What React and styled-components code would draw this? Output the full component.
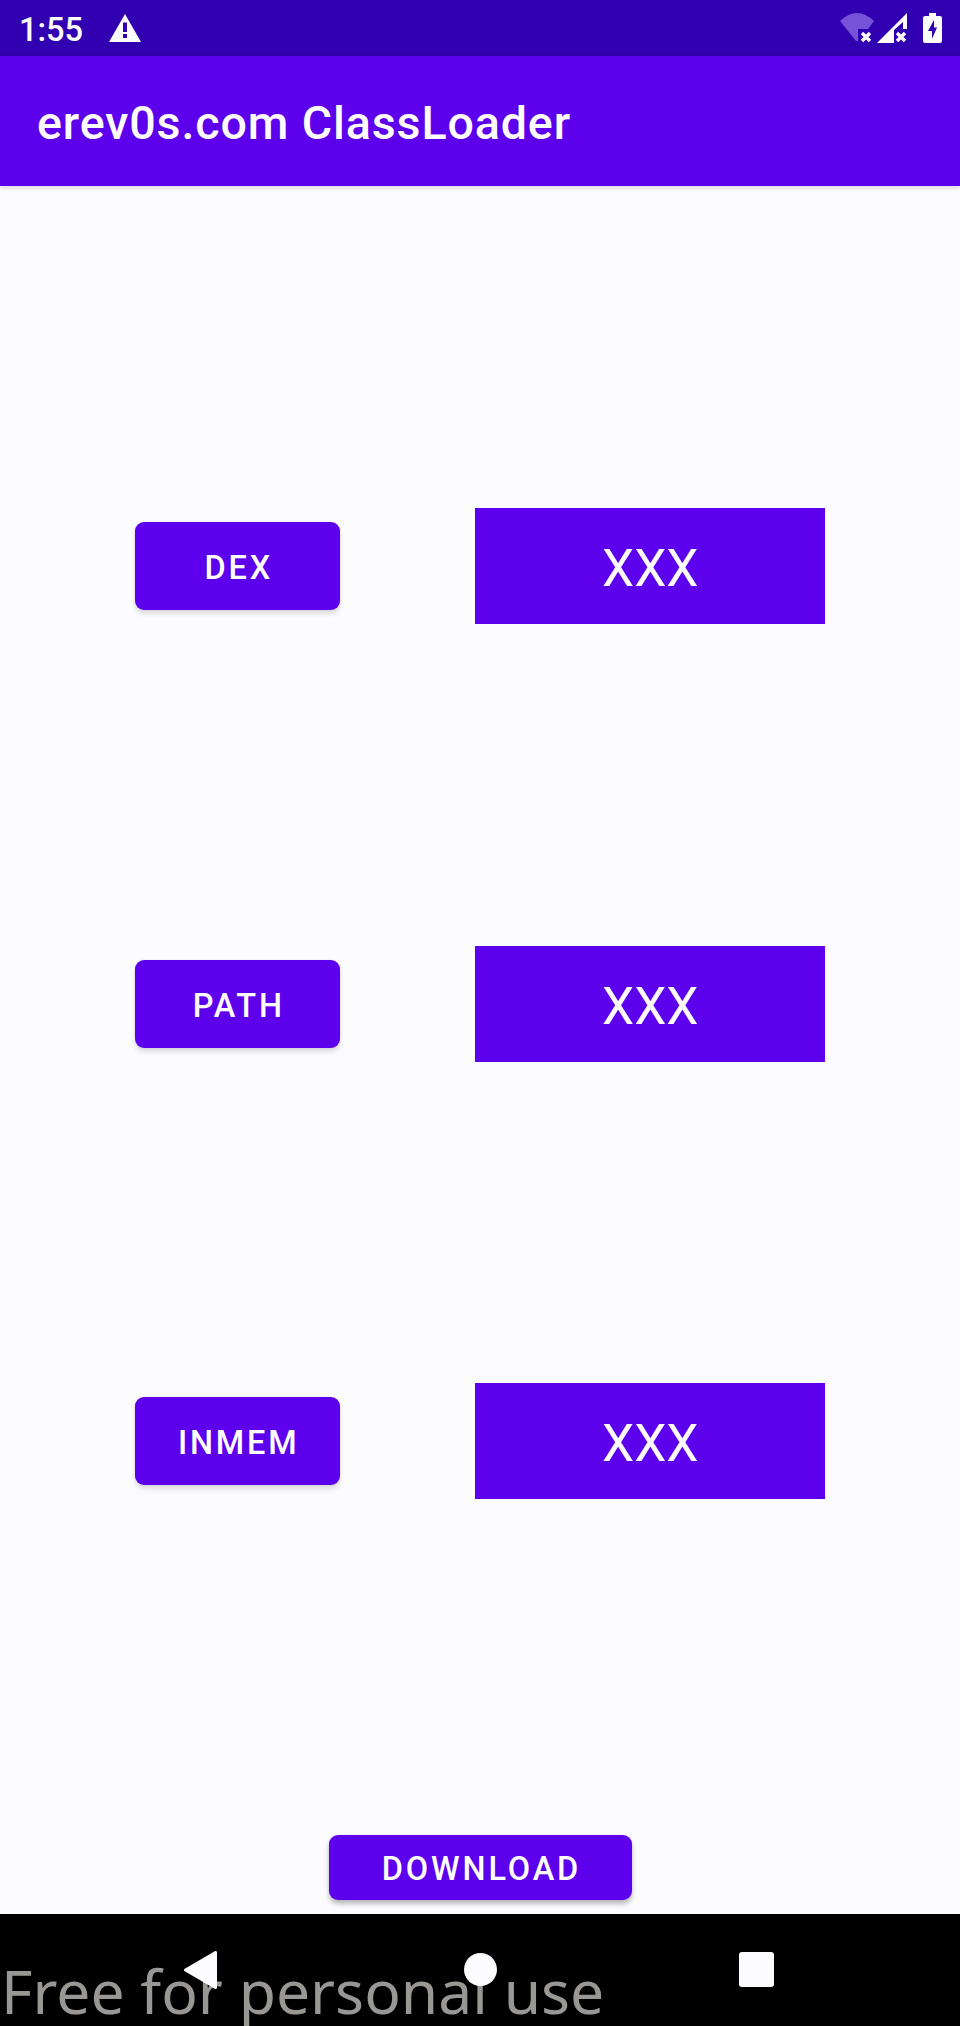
import React from "react";
import styled, { createGlobalStyle } from "styled-components";

const GlobalStyle = createGlobalStyle`
  * { box-sizing: border-box; }
  body { margin: 0; background: #fcfcff; font-family: Roboto, "Liberation Sans", sans-serif; }
`;

const Screen = styled.div`
  width: 960px;
  height: 2026px;
  display: flex;
  flex-direction: column;
  overflow: hidden;
  background: #fcfcff;
`;

const StatusBar = styled.header`
  height: 56px;
  flex: none;
  display: flex;
  align-items: center;
  justify-content: space-between;
  padding: 0 18px 0 19px;
  background: #3100b0;
  color: #fcfcff;
`;

const StatusGroup = styled.div`
  display: flex;
  align-items: center;
  gap: ${({ $gap }) => $gap}px;
`;

const Clock = styled.span`
  font-size: 32.6px;
  font-weight: 500;
  line-height: 40px;
  padding-top: 3px;
`;

const Glyph = styled.svg`
  display: block;
  flex: none;
`;

const AppBar = styled.div`
  height: 130px;
  flex: none;
  display: flex;
  align-items: center;
  padding: 4px 37px 0;
  background: #5d00ec;
  box-shadow: 0 2px 5px rgba(0, 0, 0, 0.14);
  z-index: 1;
`;

const Title = styled.h1`
  margin: 0;
  color: #fcfcff;
  font-size: 46.6px;
  font-weight: 500;
  line-height: 56px;
  letter-spacing: 0.87px;
  white-space: nowrap;
`;

const Content = styled.main`
  height: 1728px;
  flex: none;
  display: flex;
  flex-direction: column;
  align-items: center;
  justify-content: space-between;
  padding: 322px 0 14px;
`;

const LoaderList = styled.div`
  display: flex;
  flex-direction: column;
  gap: 321.5px;
`;

const LoaderRow = styled.div`
  display: flex;
  align-items: center;
  gap: 135.5px;
`;

const Button = styled.button`
  width: ${({ $width }) => $width}px;
  height: ${({ $height }) => $height}px;
  border: 0;
  border-radius: 9px;
  padding: ${({ $raised }) => ($raised ? 2 : 4)}px 0 0 3px;
  background: #5d00ec;
  color: #fcfcff;
  font: 500 32.5px/40px Roboto, "Liberation Sans", sans-serif;
  letter-spacing: 0.0875em;
  box-shadow: 0 4px 5px rgba(0, 0, 0, ${({ $raised }) => ($raised ? 0.26 : 0.12)}),
    0 0 3px rgba(0, 0, 0, 0.08);
`;

const Result = styled.div`
  width: 350px;
  height: 116px;
  display: flex;
  align-items: center;
  justify-content: center;
  padding-top: 6px;
  background: #5d00ec;
  color: #fcfcff;
  font-size: 51.3px;
  line-height: 60px;
`;

const NavBar = styled.nav`
  position: relative;
  height: 112px;
  flex: none;
  display: flex;
  align-items: center;
  justify-content: center;
  padding-bottom: 1px;
  background: #000;
`;

const NavKeys = styled.div`
  position: relative;
  display: flex;
  align-items: center;
  gap: 236.5px;
`;

const NavKey = styled.span`
  width: 40px;
  height: 38px;
  display: flex;
  align-items: center;
  justify-content: ${({ $align = "center" }) => $align};
`;

const Watermark = styled.div`
  position: absolute;
  left: 1px;
  top: 35px;
  color: #999793;
  font: 400 60.6px/84px "Noto Sans", "Open Sans", sans-serif;
  white-space: nowrap;
`;

const loaders = [
  { label: "DEX", result: "XXX" },
  { label: "PATH", result: "XXX" },
  { label: "INMEM", result: "XXX" },
];

function WarningIcon() {
  return (
    <Glyph width="32" height="28" viewBox="0 0 32 28">
      <path fill="#fcfcff" fillRule="evenodd" d="M16 0 32 28H0ZM14 8.500V18H18V8.500ZM14 20V24H18V20Z" />
    </Glyph>
  );
}

function WifiOffIcon() {
  return (
    <Glyph width="35" height="30" viewBox="0 0 35 30">
      <path fill="#7652d8" d="M0 8Q17 -8 34 8L28 16H18V28L16 28Z" />
      <path stroke="#fcfcff" strokeWidth="3.4" d="m22 20 8 8m0-8-8 8" />
    </Glyph>
  );
}

function SignalOffIcon() {
  return (
    <Glyph width="31" height="30" viewBox="0 0 31 30">
      <path fill="#fcfcff" fillRule="evenodd" d="M30 0V16H26V9L17 17V30H0Z" />
      <path stroke="#fcfcff" strokeWidth="3.4" d="m20 20 8 8m0-8-8 8" />
    </Glyph>
  );
}

function BatteryIcon() {
  return (
    <Glyph width="19" height="30" viewBox="0 0 19 30">
      <path
        fill="#fcfcff"
        fillRule="evenodd"
        d="M6 0H13V3H17Q19 3 19 5V28Q19 30 17 30H2Q0 30 0 28V5Q0 3 2 3H6ZM11 7 5 18H9V26L14 14.500H11Z"
      />
    </Glyph>
  );
}

export default function App() {
  return (
    <>
      <GlobalStyle />
      <Screen>
        <StatusBar>
          <StatusGroup $gap={26}>
            <Clock>1:55</Clock>
            <WarningIcon />
          </StatusGroup>
          <StatusGroup $gap={15}>
            <StatusGroup $gap={2}>
              <WifiOffIcon />
              <SignalOffIcon />
            </StatusGroup>
            <BatteryIcon />
          </StatusGroup>
        </StatusBar>
        <AppBar>
          <Title>erev0s.com ClassLoader</Title>
        </AppBar>
        <Content>
          <LoaderList>
            {loaders.map(({ label, result }) => (
              <LoaderRow key={label}>
                <Button $width={205} $height={88}>{label}</Button>
                <Result>{result}</Result>
              </LoaderRow>
            ))}
          </LoaderList>
          <Button $width={303} $height={65} $raised>DOWNLOAD</Button>
        </Content>
        <NavBar>
          <Watermark>Free for personal use</Watermark>
          <NavKeys>
            <NavKey $align="flex-start">
              <Glyph width="33" height="38" viewBox="0 0 33 38">
                <path
                  fill="#fcfcff"
                  stroke="#fcfcff"
                  strokeWidth="3"
                  strokeLinejoin="round"
                  d="M31.500 1.500V36.500L1.500 19Z"
                />
              </Glyph>
            </NavKey>
            <NavKey>
              <Glyph width="33" height="33" viewBox="0 0 33 33">
                <circle cx="16.5" cy="16.5" r="16.5" fill="#fcfcff" />
              </Glyph>
            </NavKey>
            <NavKey>
              <Glyph width="35" height="35" viewBox="0 0 35 35">
                <rect width="35" height="35" rx="3" fill="#fcfcff" />
              </Glyph>
            </NavKey>
          </NavKeys>
        </NavBar>
      </Screen>
    </>
  );
}
